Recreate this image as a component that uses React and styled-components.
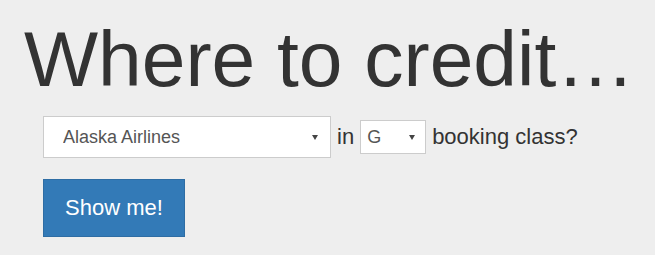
import styled, { createGlobalStyle } from "styled-components";

const GlobalStyle = createGlobalStyle`
  html, body {
    margin: 0;
    padding: 0;
    background: #eeeeee;
  }

  body {
    font-family: "Liberation Sans", Arial, sans-serif;
    color: #333333;
  }
`;

function App() {
  return (
    <>
      <GlobalStyle />
      <StyledPage>
        <Heading>Where to credit…</Heading>
        <Form onSubmit={(e) => e.preventDefault()}>
          <Row>
            <Picker $width={288} $height={42} $pad={19} $arrowRight={13}>
              <select defaultValue="AS">
                <option value="AS">Alaska Airlines</option>
                <option value="AA">American Airlines</option>
                <option value="DL">Delta Air Lines</option>
              </select>
              <Caret />
            </Picker>
            <Label>in</Label>
            <Picker $width={66} $height={34} $pad={6} $arrowRight={11}>
              <select defaultValue="G">
                <option value="G">G</option>
                <option value="Y">Y</option>
                <option value="B">B</option>
              </select>
              <Caret />
            </Picker>
            <Label>booking class?</Label>
          </Row>
          <SubmitButton type="submit">Show me!</SubmitButton>
        </Form>
      </StyledPage>
    </>
  );
}

const StyledPage = styled.main`
  padding: 16px 0 0 24px;
`;

const Heading = styled.h1`
  margin: 0;
  font-size: 78.5px;
  font-weight: 400;
  line-height: 87px;
  color: #333333;
`;

const Form = styled.form`
  display: flex;
  flex-direction: column;
  align-items: flex-start;
  gap: 21px;
  margin-top: 13px;
  padding-left: 19px;
`;

const Row = styled.div`
  display: flex;
  align-items: center;
  gap: 6px;
`;

const Picker = styled.div`
  position: relative;
  width: ${(p) => p.$width}px;
  height: ${(p) => p.$height}px;

  select {
    appearance: none;
    box-sizing: border-box;
    width: 100%;
    height: 100%;
    margin: 0;
    padding: 0 24px 0 ${(p) => p.$pad}px;
    border: 1px solid #cccccc;
    border-radius: 0;
    background: #ffffff;
    color: #555555;
    font-family: "Liberation Sans", Arial, sans-serif;
    font-size: 18px;
    outline: none;
  }

  span {
    right: ${(p) => p.$arrowRight}px;
  }
`;

const Caret = styled.span`
  position: absolute;
  top: 50%;
  width: 0;
  height: 0;
  margin-top: -2px;
  border-left: 3.5px solid transparent;
  border-right: 3.5px solid transparent;
  border-top: 5px solid #444444;
  pointer-events: none;
`;

const Label = styled.span`
  font-size: 22px;
  color: #333333;
`;

const SubmitButton = styled.button`
  box-sizing: border-box;
  width: 142px;
  height: 58px;
  padding: 0;
  border: 1px solid #2e6da4;
  border-radius: 0;
  background: #337ab7;
  color: #ffffff;
  font-family: "Liberation Sans", Arial, sans-serif;
  font-size: 22px;
  cursor: pointer;
`;

export default App;
